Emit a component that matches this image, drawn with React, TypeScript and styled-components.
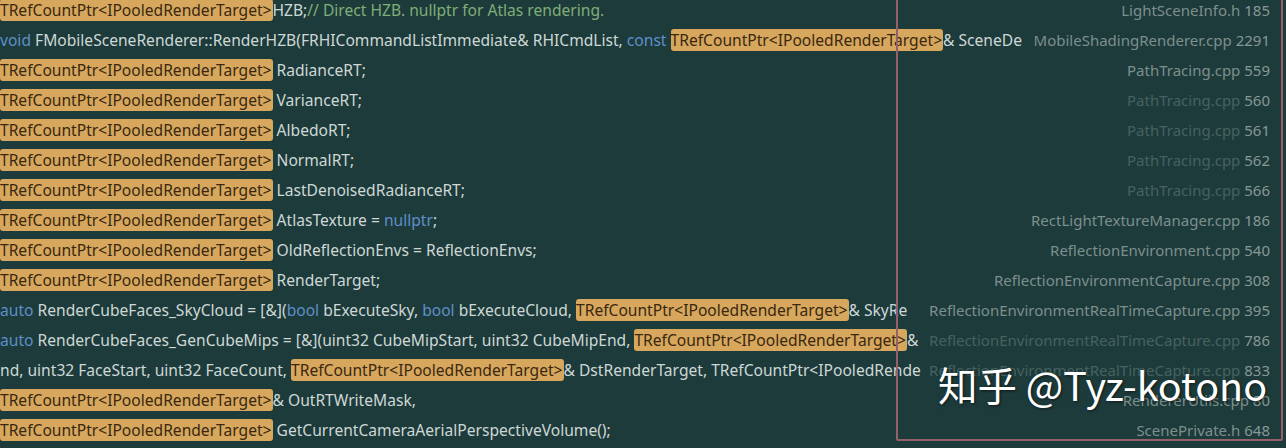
import { FC, ReactNode } from 'react'
import styled, { createGlobalStyle } from 'styled-components'

const GlobalStyle = createGlobalStyle`
  html, body {
    margin: 0;
    padding: 0;
    background: #1e3b3b;
  }
  body {
    font-family: 'Noto Sans', 'Noto Sans CJK SC', sans-serif;
  }
`

const HL = 'TRefCountPtr<IPooledRenderTarget>'

type Seg = { t: string; k?: 'kw' | 'cm' | 'hl' }

type Result = {
  code: Seg[]
  file: string
  line: string
  dim?: boolean
}

const results: Result[] = [
  { code: [{ t: HL, k: 'hl' }, { t: 'HZB;' }, { t: '// Direct HZB. nullptr for Atlas rendering.', k: 'cm' }], file: 'LightSceneInfo.h', line: '185' },
  {
    code: [
      { t: 'void', k: 'kw' },
      { t: ' FMobileSceneRenderer::RenderHZB(FRHICommandListImmediate& RHICmdList, ' },
      { t: 'const', k: 'kw' },
      { t: ' ' },
      { t: HL, k: 'hl' },
      { t: '& SceneDe' },
    ],
    file: 'MobileShadingRenderer.cpp',
    line: '2291',
  },
  { code: [{ t: HL, k: 'hl' }, { t: ' RadianceRT;' }], file: 'PathTracing.cpp', line: '559' },
  { code: [{ t: HL, k: 'hl' }, { t: ' VarianceRT;' }], file: 'PathTracing.cpp', line: '560', dim: true },
  { code: [{ t: HL, k: 'hl' }, { t: ' AlbedoRT;' }], file: 'PathTracing.cpp', line: '561', dim: true },
  { code: [{ t: HL, k: 'hl' }, { t: ' NormalRT;' }], file: 'PathTracing.cpp', line: '562', dim: true },
  { code: [{ t: HL, k: 'hl' }, { t: ' LastDenoisedRadianceRT;' }], file: 'PathTracing.cpp', line: '566', dim: true },
  { code: [{ t: HL, k: 'hl' }, { t: ' AtlasTexture = ' }, { t: 'nullptr', k: 'kw' }, { t: ';' }], file: 'RectLightTextureManager.cpp', line: '186' },
  { code: [{ t: HL, k: 'hl' }, { t: ' OldReflectionEnvs = ReflectionEnvs;' }], file: 'ReflectionEnvironment.cpp', line: '540' },
  { code: [{ t: HL, k: 'hl' }, { t: ' RenderTarget;' }], file: 'ReflectionEnvironmentCapture.cpp', line: '308' },
  {
    code: [
      { t: 'auto', k: 'kw' },
      { t: ' RenderCubeFaces_SkyCloud = [&](' },
      { t: 'bool', k: 'kw' },
      { t: ' bExecuteSky, ' },
      { t: 'bool', k: 'kw' },
      { t: ' bExecuteCloud, ' },
      { t: HL, k: 'hl' },
      { t: '& SkyRe' },
    ],
    file: 'ReflectionEnvironmentRealTimeCapture.cpp',
    line: '395',
  },
  {
    code: [
      { t: 'auto', k: 'kw' },
      { t: ' RenderCubeFaces_GenCubeMips = [&](uint32 CubeMipStart, uint32 CubeMipEnd, ' },
      { t: HL, k: 'hl' },
      { t: '&' },
    ],
    file: 'ReflectionEnvironmentRealTimeCapture.cpp',
    line: '786',
    dim: true,
  },
  {
    code: [
      { t: 'nd, uint32 FaceStart, uint32 FaceCount, ' },
      { t: HL, k: 'hl' },
      { t: '& DstRenderTarget, TRefCountPtr<IPooledRende' },
    ],
    file: 'ReflectionEnvironmentRealTimeCapture.cpp',
    line: '833',
    dim: true,
  },
  { code: [{ t: HL, k: 'hl' }, { t: '& OutRTWriteMask,' }], file: 'RendererUtils.cpp', line: '80' },
  { code: [{ t: HL, k: 'hl' }, { t: ' GetCurrentCameraAerialPerspectiveVolume();' }], file: 'ScenePrivate.h', line: '648' },
]

const renderSeg = (s: Seg, i: number): ReactNode => {
  if (s.k === 'hl') return <Match key={i}>{s.t}</Match>
  if (s.k === 'kw') return <Keyword key={i}>{s.t}</Keyword>
  if (s.k === 'cm') return <Comment key={i}>{s.t}</Comment>
  return <span key={i}>{s.t}</span>
}

const App: FC = () => (
  <>
    <GlobalStyle />
    <Panel>
      <List>
        {results.map((r, i) => (
          <Row key={i}>
            <Code>{r.code.map(renderSeg)}</Code>
            <FileLabel>
              <FileName $dim={r.dim}>{r.file}</FileName> <LineNo>{r.line}</LineNo>
            </FileLabel>
          </Row>
        ))}
      </List>
      <Selection />
      <Watermark>知乎 @Tyz-kotono</Watermark>
    </Panel>
  </>
)

export default App

const Panel = styled.div`
  position: relative;
  width: 1286px;
  height: 448px;
  overflow: hidden;
  background: #1e3b3b;
`

const List = styled.div`
  display: flex;
  flex-direction: column;
  margin-top: -5px;
`

const Row = styled.div`
  display: flex;
  align-items: center;
  height: 30px;
  font-size: 15.6px;
  color: #cdd8d6;
  white-space: nowrap;
`

const Code = styled.div`
  flex: 1;
  min-width: 0;
  overflow: hidden;
`

const Match = styled.span`
  display: inline-block;
  height: 22px;
  line-height: 22px;
  padding: 0 1px 0 0;
  background: #d6a75d;
  color: #3a2710;
  border-radius: 3px;
`

const Keyword = styled.span`
  color: #5d8fc8;
`

const Comment = styled.span`
  color: #7fae78;
`

const FileLabel = styled.div`
  flex-shrink: 0;
  padding: 0 16px 0 6px;
  font-size: 15px;
  background: #1e3b3b;
  color: #7c8f8d;
`

const FileName = styled.span<{ $dim?: boolean }>`
  color: ${(p) => (p.$dim ? '#466260' : '#7c8f8d')};
`

const LineNo = styled.span`
  color: #869896;
`

const Selection = styled.div`
  position: absolute;
  left: 896px;
  top: -10px;
  width: 383px;
  height: 447px;
  border: 2px solid #94606a;
  border-radius: 2px;
  pointer-events: none;
`

const Watermark = styled.div`
  position: absolute;
  left: 938px;
  top: 357px;
  font-family: 'Noto Sans CJK SC', 'Noto Sans', sans-serif;
  font-size: 39.5px;
  line-height: 54px;
  color: #ffffff;
  text-shadow: 1px 1px 3px rgba(0, 0, 0, 0.6);
  white-space: nowrap;
`
